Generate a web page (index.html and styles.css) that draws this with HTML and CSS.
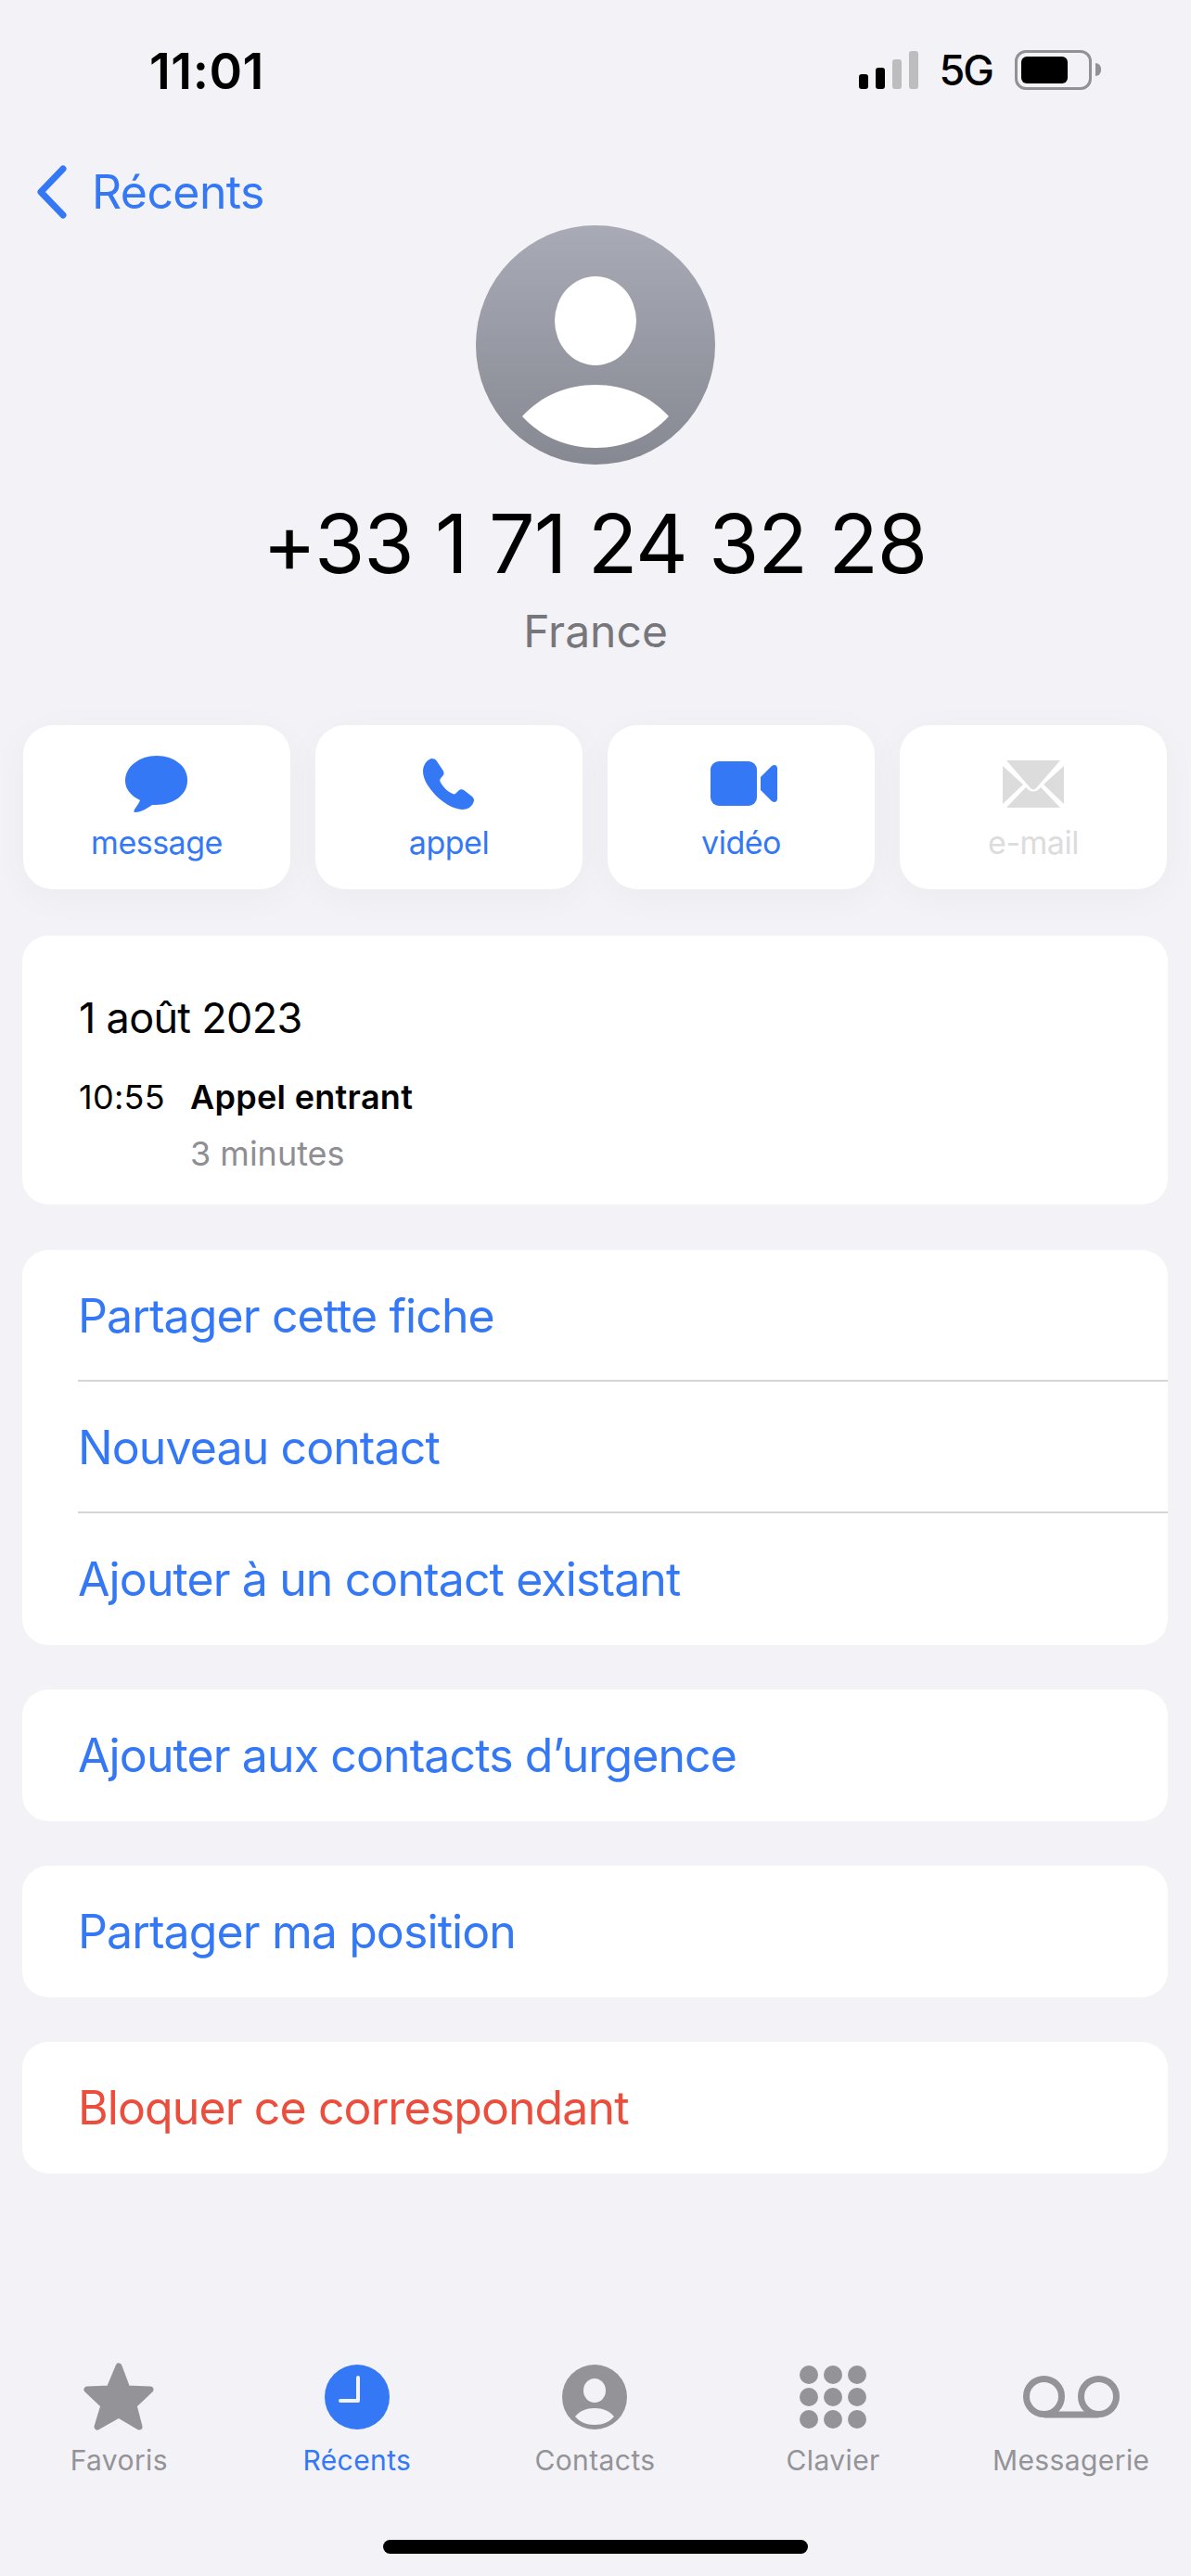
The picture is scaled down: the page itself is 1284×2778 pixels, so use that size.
FILE: index.html
```html
<!DOCTYPE html>
<html lang="fr">
<head>
  <meta charset="UTF-8">
  <meta name="viewport" content="width=device-width, initial-scale=1.0">
  <title>Récents</title>
  <link rel="stylesheet" href="styles.css">
</head>
<body>
  <div class="page">
    <div class="status-bar">
      <span class="time">11:01</span>
      <div class="status-right">
        <div class="signal">
          <span class="bar bar-1"></span>
          <span class="bar bar-2"></span>
          <span class="bar bar-3"></span>
          <span class="bar bar-4"></span>
        </div>
        <span class="network">5G</span>
        <div class="battery"><span class="battery-level"></span></div>
        <span class="battery-nub"></span>
      </div>
    </div>

    <div class="nav">
      <svg class="chevron" width="34" height="58" viewBox="0 0 34 58">
        <path d="M29 4 L5 29 L29 54" fill="none" stroke="#3478f6" stroke-width="7" stroke-linecap="round" stroke-linejoin="round"/>
      </svg>
      <span class="nav-label">Récents</span>
    </div>

    <div class="contact">
      <svg class="avatar" width="258" height="258" viewBox="0 0 258 258">
        <defs>
          <linearGradient id="avatarFill" x1="0" y1="0" x2="0" y2="1">
            <stop offset="0" stop-color="#a8abb6"/>
            <stop offset="1" stop-color="#868991"/>
          </linearGradient>
        </defs>
        <circle cx="129" cy="129" r="129" fill="url(#avatarFill)"/>
        <ellipse cx="129" cy="103" rx="44" ry="48" fill="#fff"/>
        <path d="M50 206 C70 184 98 172 129 172 C160 172 188 184 208 206 C188 228 160 240 129 240 C98 240 70 228 50 206 Z" fill="#fff"/>
      </svg>
      <h1 class="number">+33 1 71 24 32 28</h1>
      <div class="country">France</div>
    </div>

    <div class="actions">
      <div class="action">
        <div class="action-icon">
          <svg width="68" height="61" viewBox="0 0 68 61">
            <path d="M34 0 C53 0 68 12 67 27 C67 42 52 53 33 53 C32 53 30 53 29 53 C25 56 17 61 11 61 C9 61 9 60 10 58 C12 55 15 51 16 48 C6 43 0 36 0 27 C0 12 15 0 34 0 Z" fill="#3478f6"/>
          </svg>
        </div>
        <span class="action-label">message</span>
      </div>
      <div class="action">
        <div class="action-icon icon-phone">
          <svg width="55" height="55" viewBox="0 0 55 55">
            <path d="M9 0 C12 0 14 1 15 3 L21 12 C23 15 23 17 21 19 L19 21.5 C18 23 18 24 19 26 C22 31 27 36 32 38 C34 39 35 38 36 37 L38 35 C40 33 42 33 44 34 L53 41 C55 43 55.5 45 54.5 47 C53 52 48 55 43 55 C35 55 25 50 15 41 C6 32 0 22 0 14 C0 8 3 2 9 0 Z" fill="#3478f6"/>
          </svg>
        </div>
        <span class="action-label">appel</span>
      </div>
      <div class="action">
        <div class="action-icon icon-video">
          <svg width="72" height="48" viewBox="0 0 72 48">
            <rect x="0" y="0" width="50" height="48" rx="9" fill="#3478f6"/>
            <path d="M54 17 L66 5 C69 3 72 4 72 8 L72 40 C72 44 69 45 66 43 L54 31 Z" fill="#3478f6"/>
          </svg>
        </div>
        <span class="action-label">vidéo</span>
      </div>
      <div class="action action-disabled">
        <div class="action-icon">
          <svg width="66" height="51" viewBox="0 0 66 51">
            <path d="M4 0 H62 L36 30 C34 32 32 32 30 30 Z" fill="#dcdcdc"/>
            <path d="M0 6 L22 26 L0 47 Z M66 6 L44 26 L66 47 Z" fill="#dcdcdc"/>
            <path d="M4 51 L25 29 C30 35 36 35 41 29 L62 51 Z" fill="#dcdcdc"/>
          </svg>
        </div>
        <span class="action-label">e-mail</span>
      </div>
    </div>

    <div class="card call-card">
      <div class="call-date">1 août 2023</div>
      <div class="call-row">
        <span class="call-time">10:55</span>
        <div class="call-info">
          <div class="call-type">Appel entrant</div>
          <div class="call-length">3 minutes</div>
        </div>
      </div>
    </div>

    <div class="card links links-group">
      <div class="link">Partager cette fiche</div>
      <div class="link">Nouveau contact</div>
      <div class="link">Ajouter à un contact existant</div>
    </div>
    <div class="card links">
      <div class="link">Ajouter aux contacts d’urgence</div>
    </div>
    <div class="card links">
      <div class="link">Partager ma position</div>
    </div>
    <div class="card links">
      <div class="link link-danger">Bloquer ce correspondant</div>
    </div>

    <div class="tabbar">
      <div class="tab">
        <div class="tab-icon">
          <svg width="76" height="74" viewBox="0 0 76 74">
            <path d="M38 4 L47 28 L72 29 L54 46 L60 69 L38 56 L15 69 L22 46 L4 29 L28 28 Z" fill="#939398" stroke="#939398" stroke-width="7" stroke-linejoin="round"/>
          </svg>
        </div>
        <span class="tab-label">Favoris</span>
      </div>
      <div class="tab tab-active">
        <div class="tab-icon">
          <svg width="70" height="70" viewBox="0 0 70 70">
            <circle cx="35" cy="35" r="35" fill="#3478f6"/>
            <path d="M36 14 V39 H17" fill="none" stroke="#f2f2f7" stroke-width="4" stroke-linecap="round" stroke-linejoin="round"/>
          </svg>
        </div>
        <span class="tab-label">Récents</span>
      </div>
      <div class="tab">
        <div class="tab-icon">
          <svg width="70" height="70" viewBox="0 0 70 70">
            <circle cx="35" cy="35" r="35" fill="#939398"/>
            <ellipse cx="35" cy="28" rx="12" ry="13" fill="#f2f2f7"/>
            <path d="M14 56 C19 50 26 47 35 47 C44 47 51 50 56 56 C51 62 44 65 35 65 C26 65 19 62 14 56 Z" fill="#f2f2f7"/>
          </svg>
        </div>
        <span class="tab-label">Contacts</span>
      </div>
      <div class="tab">
        <div class="tab-icon">
          <svg width="72" height="70" viewBox="0 0 72 70" fill="#939398">
            <circle cx="10" cy="11" r="10"/><circle cx="36" cy="11" r="10"/><circle cx="62" cy="11" r="10"/>
            <circle cx="10" cy="35" r="10"/><circle cx="36" cy="35" r="10"/><circle cx="62" cy="35" r="10"/>
            <circle cx="10" cy="59" r="10"/><circle cx="36" cy="59" r="10"/><circle cx="62" cy="59" r="10"/>
          </svg>
        </div>
        <span class="tab-label">Clavier</span>
      </div>
      <div class="tab">
        <div class="tab-icon">
          <svg width="104" height="46" viewBox="0 0 104 46">
            <circle cx="22.5" cy="22.5" r="19" fill="none" stroke="#939398" stroke-width="7"/>
            <circle cx="81.5" cy="22.5" r="19" fill="none" stroke="#939398" stroke-width="7"/>
            <path d="M22.5 42 H81.5" stroke="#939398" stroke-width="7"/>
          </svg>
        </div>
        <span class="tab-label">Messagerie</span>
      </div>
    </div>

    <div class="home-indicator"></div>
  </div>
</body>
</html>
```

FILE: styles.css
```css
body {
  margin: 0;
  background-color: #f2f2f7;
  font-family: 'Inter', 'Liberation Sans', sans-serif;
  color: #000;
}

.page {
  display: flex;
  flex-direction: column;
  height: 2778px;
  overflow: hidden;
}

/* status bar */
.status-bar {
  display: flex;
  justify-content: space-between;
  align-items: flex-end;
  height: 97px;
  padding: 0 97px 0 161px;
}

.time {
  font-size: 54px;
  line-height: 54px;
  font-weight: 600;
  letter-spacing: 0.5px;
  margin-bottom: -7px;
}

.status-right {
  display: flex;
  align-items: center;
}

.signal {
  display: flex;
  align-items: flex-end;
  gap: 8px;
  height: 41px;
  margin-right: 25px;
}

.bar {
  width: 10px;
  border-radius: 3px;
  background-color: #000;
}

.bar-1 { height: 16px; }
.bar-2 { height: 23px; }
.bar-3 { height: 32px; background-color: #bdbdc0; }
.bar-4 { height: 41px; background-color: #bdbdc0; }

.network {
  font-size: 45px;
  line-height: 42px;
  font-weight: 500;
  letter-spacing: -2px;
  margin: 2px 24px 0 -2px;
}

.battery {
  box-sizing: border-box;
  width: 83px;
  height: 43px;
  padding: 4px;
  border: 3px solid #929295;
  border-radius: 12px;
}

.battery-level {
  display: block;
  width: 50px;
  height: 29px;
  background-color: #000;
  border-radius: 6px;
}

.battery-nub {
  width: 6px;
  height: 14px;
  margin-left: 4px;
  background-color: #929295;
  border-radius: 0 7px 7px 0;
}

/* back link */
.nav {
  display: flex;
  align-items: center;
  height: 58px;
  margin-top: 81px;
  padding-left: 39px;
  color: #3478f6;
}

.nav-label {
  margin-left: 26px;
  font-size: 50px;
  letter-spacing: -0.6px;
}

/* contact header */
.contact {
  display: flex;
  flex-direction: column;
  align-items: center;
  margin-top: 7px;
}

.number {
  margin: 30px 2px 0 0;
  font-size: 88px;
  line-height: 110px;
  font-weight: 400;
  letter-spacing: -1.2px;
  white-space: nowrap;
}

.country {
  margin-top: 10px;
  font-size: 48px;
  line-height: 60px;
  color: #77777b;
}

/* action buttons */
.actions {
  display: grid;
  grid-template-columns: repeat(4, 288px);
  column-gap: 27px;
  margin: 71px 0 0 25px;
}

.action {
  display: flex;
  flex-direction: column;
  align-items: center;
  height: 177px;
  background-color: #fff;
  border-radius: 32px;
  box-shadow: 0 8px 40px rgba(0, 0, 0, 0.035);
  color: #3478f6;
}

.action-disabled {
  color: #dcdcdc;
}

.action-icon {
  display: flex;
  align-items: center;
  justify-content: center;
  height: 62px;
  margin-top: 32px;
}

.icon-phone {
  margin-right: 2px;
}

.icon-video {
  margin-left: 6px;
}

.action-label {
  margin-top: 12px;
  font-size: 34px;
  line-height: 42px;
  letter-spacing: -0.5px;
}

/* cards */
.card {
  width: 1235px;
  margin: 48px 0 0 24px;
  background-color: #fff;
  border-radius: 28px;
}

.call-card {
  box-sizing: border-box;
  height: 290px;
  margin-top: 50px;
  padding: 62px 61px 0;
}

.call-card + .card {
  margin-top: 49px;
}

.call-date {
  font-size: 45px;
  line-height: 54px;
  letter-spacing: -0.7px;
}

.call-row {
  display: flex;
  margin-top: 28px;
  font-size: 36px;
  line-height: 60px;
}

.call-time {
  width: 120px;
  letter-spacing: 0.3px;
}

.call-type {
  font-weight: 600;
  letter-spacing: 0.3px;
}

.call-length {
  color: #8e8e93;
  margin-top: 1px;
}

.links {
  overflow: hidden;
}

.links-group {
  padding-bottom: 2px;
}

.link {
  height: 142px;
  margin-left: 60px;
  font-size: 50px;
  line-height: 142px;
  letter-spacing: -0.9px;
  color: #3478f6;
}

.links-group .link {
  height: 140px;
  line-height: 142px;
}

.link + .link {
  border-top: 2px solid #d5d5d8;
}

.link-danger {
  color: #eb4e3d;
}

/* tab bar */
.tabbar {
  display: grid;
  grid-template-columns: repeat(5, 1fr);
  margin-top: auto;
  padding-right: 1px;
}

.tab {
  display: flex;
  flex-direction: column;
  align-items: center;
  color: #939398;
}

.tab-active {
  color: #3478f6;
}

.tab-icon {
  display: flex;
  align-items: center;
  justify-content: center;
  height: 74px;
}

.tab-label {
  margin-top: 13px;
  font-size: 30px;
  line-height: 36px;
  letter-spacing: 0.4px;
}

.home-indicator {
  align-self: center;
  width: 458px;
  height: 15px;
  margin: 68px 0 24px;
  background-color: #000;
  border-radius: 8px;
}
```
